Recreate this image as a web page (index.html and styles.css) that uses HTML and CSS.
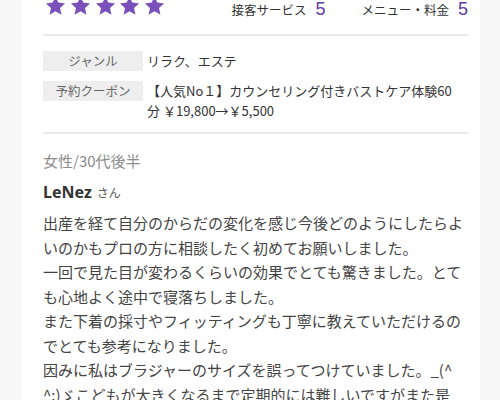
FILE: index.html
```html
<!DOCTYPE html>
<html lang="ja">
<head>
<meta charset="utf-8">
<link rel="stylesheet" href="styles.css">
</head>
<body>
<div class="panel">
  <div class="rating-row">
    <div class="stars">
      <svg class="star" viewBox="0 0 24 23"><polygon points="12,0.5 15.2,7.6 23,8.5 17.2,13.8 18.8,21.6 12,17.6 5.2,21.6 6.8,13.8 1,8.5 8.8,7.6"/></svg>
      <svg class="star" viewBox="0 0 24 23"><polygon points="12,0.5 15.2,7.6 23,8.5 17.2,13.8 18.8,21.6 12,17.6 5.2,21.6 6.8,13.8 1,8.5 8.8,7.6"/></svg>
      <svg class="star" viewBox="0 0 24 23"><polygon points="12,0.5 15.2,7.6 23,8.5 17.2,13.8 18.8,21.6 12,17.6 5.2,21.6 6.8,13.8 1,8.5 8.8,7.6"/></svg>
      <svg class="star" viewBox="0 0 24 23"><polygon points="12,0.5 15.2,7.6 23,8.5 17.2,13.8 18.8,21.6 12,17.6 5.2,21.6 6.8,13.8 1,8.5 8.8,7.6"/></svg>
      <svg class="star" viewBox="0 0 24 23"><polygon points="12,0.5 15.2,7.6 23,8.5 17.2,13.8 18.8,21.6 12,17.6 5.2,21.6 6.8,13.8 1,8.5 8.8,7.6"/></svg>
    </div>
    <div class="scores">
      <span class="score"><span class="score-label">接客サービス</span><span class="score-num">5</span></span>
      <span class="score"><span class="score-label">メニュー・料金</span><span class="score-num">5</span></span>
    </div>
  </div>
  <div class="divider divider-top"></div>
  <div class="info">
    <div class="info-label">ジャンル</div>
    <div class="info-value">リラク、エステ</div>
    <div class="info-label">予約クーポン</div>
    <div class="info-value">【人気No１】カウンセリング付きバストケア体験60<br>分 ￥19,800→￥5,500</div>
  </div>
  <div class="divider divider-mid"></div>
  <div class="reviewer-meta">女性/30代後半</div>
  <div class="reviewer-name"><span class="name">LeNez</span><span class="san">さん</span></div>
  <p class="review-body">出産を経て自分のからだの変化を感じ今後どのようにしたらよいのかもプロの方に相談したく初めてお願いしました。<br>一回で見た目が変わるくらいの効果でとても驚きました。とても心地よく途中で寝落ちしました。<br>また下着の採寸やフィッティングも丁寧に教えていただけるのでとても参考になりました。<br>因みに私はブラジャーのサイズを誤ってつけていました。_(^<br>^;)ゞこどもが大きくなるまで定期的には難しいですがまた是</p>
</div>
</body>
</html>
```

FILE: styles.css
```css
html, body {
  margin: 0;
  padding: 0;
  background: #f7f7f7;
}
body {
  font-family: "Noto Sans CJK JP", "Noto Sans", sans-serif;
  color: #333;
  overflow: hidden;
  height: 400px;
}
.panel {
  margin: 0 20px 0 22px;
  background: #fff;
  padding: 0 12px 0 21px;
  height: 400px;
  overflow: hidden;
}
.rating-row {
  display: flex;
  align-items: flex-start;
  height: 20px;
  margin-top: -4px;
}
.stars {
  display: flex;
  gap: 3.75px;
  margin-left: 2px;
}
.star {
  width: 21px;
  height: 20px;
  fill: #7a50ba;
  display: block;
}
.scores {
  margin-left: auto;
  display: flex;
  gap: 36px;
  padding-top: 3px;
  line-height: 20px;
}
.score {
  display: flex;
  align-items: baseline;
}
.score-label {
  font-size: 12.5px;
  color: #333;
}
.score-num {
  font-family: "Liberation Sans", sans-serif;
  font-size: 18px;
  color: #5f3c9e;
  margin-left: 9px;
}
.divider {
  height: 2px;
  background: #e9e9e9;
}
.divider-top {
  margin-top: 18px;
}
.info {
  margin-top: 15px;
  display: grid;
  grid-template-columns: 100px 1fr;
  column-gap: 4px;
  row-gap: 10px;
}
.info-label {
  align-self: start;
  background: #eeeeee;
  color: #666;
  font-size: 12.5px;
  line-height: 19.5px;
  text-align: center;
}
.info-value {
  font-size: 13px;
  line-height: 20px;
  color: #333;
}
.divider-mid {
  margin-top: 11px;
}
.reviewer-meta {
  margin-top: 17px;
  font-size: 15px;
  line-height: 20px;
  color: #8c8c8c;
  word-spacing: 2px;
}
.reviewer-name {
  margin-top: 10px;
  line-height: 22px;
  display: flex;
  align-items: baseline;
}
.name {
  font-family: "Noto Sans", sans-serif;
  font-weight: 700;
  font-size: 16px;
  color: #333;
}
.san {
  font-size: 12px;
  color: #555;
  margin-left: 5px;
}
.review-body {
  margin: 7px 0 0;
  font-size: 15px;
  line-height: 24.5px;
  color: #444;
}
```
